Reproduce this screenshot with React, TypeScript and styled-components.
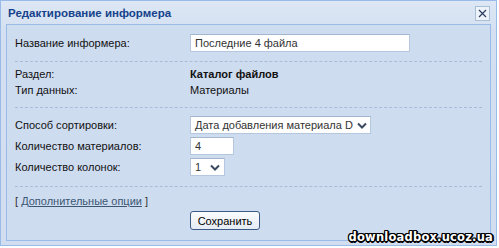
import React from "react";
import styled, { createGlobalStyle } from "styled-components";

const Global = createGlobalStyle`
  html, body {
    margin: 0;
    padding: 0;
    background: #ffffff;
  }
  body {
    font-family: Tahoma, "Liberation Sans", sans-serif;
    font-size: 11px;
  }
`;

const Win = styled.div`
  position: relative;
  width: 497px;
  height: 246px;
  box-sizing: border-box;
  border: 1px solid #99bbe8;
  background: linear-gradient(#dde7f5, #d4e0f1 30px, #d2def0);
  padding: 0 5px 4px 5px;
  display: flex;
  flex-direction: column;
`;

const TitleBar = styled.div`
  height: 23px;
  display: flex;
  align-items: center;
  justify-content: space-between;
  padding: 0 2px;
`;

const Title = styled.div`
  font-family: "Liberation Sans", Arial, sans-serif;
  font-weight: bold;
  font-size: 11.5px;
  color: #15428b;
`;

const Close = styled.div`
  width: 13px;
  height: 13px;
  margin-right: -1px;
  margin-top: 1px;
  border: 1px solid #a9bfd6;
  background: #eef3fa;
  display: flex;
  align-items: center;
  justify-content: center;
`;

const Body = styled.div`
  flex: 1;
  border: 1px solid #99bbe8;
  background: #cedcf0;
  padding: 0 8px;
  font-family: "Liberation Sans", Arial, sans-serif;
  font-size: 11px;
  color: #111;
`;

const Section = styled.div<{ $gap?: number; $top: number; $bottom: number }>`
  display: grid;
  grid-template-columns: 175px 1fr;
  row-gap: ${(p) => p.$gap ?? 3}px;
  align-items: center;
  padding: ${(p) => p.$top}px 0 ${(p) => p.$bottom}px 0;
`;

const Sep = styled.div`
  border-top: 1px dashed #a8bcd8;
`;

const Label = styled.div`
  line-height: 16px;
`;

const Value = styled.div<{ $bold?: boolean }>`
  line-height: 16px;
  font-weight: ${(p) => (p.$bold ? "bold" : "normal")};
`;

const Input = styled.div<{ $w: number }>`
  width: ${(p) => p.$w}px;
  height: 18px;
  box-sizing: border-box;
  border: 1px solid #b5c7de;
  border-top-color: #a4b6cf;
  background: #fff;
  padding: 0 4px;
  line-height: 16px;
  color: #333;
  display: flex;
  align-items: center;
  justify-content: space-between;
  white-space: nowrap;
  overflow: hidden;
`;

const Arrow = styled.svg`
  flex: none;
  margin-left: 4px;
`;

const Links = styled.div`
  padding: 6px 0 0 0;
  line-height: 16px;
  color: #333;
  a {
    color: #3b5773;
    text-decoration: underline;
  }
`;

const Actions = styled.div`
  padding: 2px 0 0 175px;
`;

const Button = styled.div`
  width: 70px;
  height: 19px;
  box-sizing: border-box;
  border: 1px solid #3d5a86;
  border-radius: 3px;
  background: linear-gradient(#fbfcfe, #e6ecf4);
  display: flex;
  align-items: center;
  justify-content: center;
  color: #000;
`;

const Mark = styled.div`
  position: absolute;
  right: 3px;
  bottom: 1px;
  font-family: "DejaVu Sans", sans-serif;
  font-weight: bold;
  font-size: 11.5px;
  color: #fff;
  letter-spacing: 0.2px;
  text-shadow: 1px 0 #000, -1px 0 #000, 0 1px #000, 0 -1px #000,
    1px 1px #000, -1px -1px #000, 1px -1px #000, -1px 1px #000,
    2px 0 #000, 0 2px #000;
`;

const Chevron = () => (
  <Arrow width="10" height="7" viewBox="0 0 10 7">
    <path d="M1 1.5 L5 5.5 L9 1.5" fill="none" stroke="#3a4a60" strokeWidth="2" />
  </Arrow>
);

export default function App() {
  return (
    <>
      <Global />
      <Win>
        <TitleBar>
          <Title>Редактирование информера</Title>
          <Close>
            <svg width="9" height="9" viewBox="0 0 9 9">
              <path d="M1 1 L8 8 M8 1 L1 8" stroke="#2a3f5f" strokeWidth="1.2" />
            </svg>
          </Close>
        </TitleBar>
        <Body>
          <Section $top={9} $bottom={9}>
            <Label>Название информера:</Label>
            <Input $w={220}>Последние 4 файла</Input>
          </Section>
          <Sep />
          <Section $gap={0} $top={4} $bottom={9}>
            <Label>Раздел:</Label>
            <Value $bold>Каталог файлов</Value>
            <Label>Тип данных:</Label>
            <Value>Материалы</Value>
          </Section>
          <Sep />
          <Section $top={8} $bottom={10}>
            <Label>Способ сортировки:</Label>
            <Input $w={181}>
              Дата добавления материала D
              <Chevron />
            </Input>
            <Label>Количество материалов:</Label>
            <Input $w={44}>4</Input>
            <Label>Количество колонок:</Label>
            <Input $w={35}>
              1
              <Chevron />
            </Input>
          </Section>
          <Sep />
          <Links>
            [ <a>Дополнительные опции</a> ]
          </Links>
          <Actions>
            <Button>Сохранить</Button>
          </Actions>
        </Body>
        <Mark>downloadbox.ucoz.ua</Mark>
      </Win>
    </>
  );
}
